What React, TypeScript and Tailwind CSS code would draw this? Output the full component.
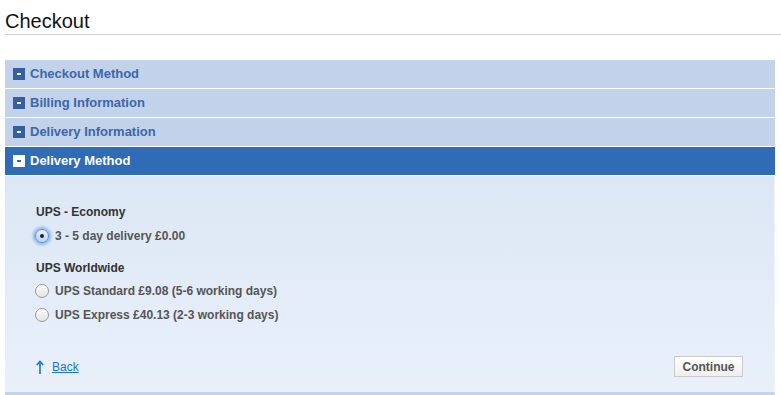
const STEPS = ["Checkout Method", "Billing Information", "Delivery Information"];

const OPTIONS_WORLDWIDE = [
  "UPS Standard £9.08 (5-6 working days)",
  "UPS Express £40.13 (2-3 working days)",
];

function MinusBox({ active }: { active?: boolean }) {
  return (
    <span
      className={
        "flex h-[12px] w-[12px] items-center justify-center " +
        (active ? "bg-white" : "bg-[#355f9f]")
      }
    >
      <span className={"h-[2px] w-[4px] " + (active ? "bg-[#2f6cb5]" : "bg-white")} />
    </span>
  );
}

function StepHeader({ label, active }: { label: string; active?: boolean }) {
  return (
    <div
      className={
        "flex h-[28px] items-center gap-[5px] pl-[8px] text-[13px] font-bold " +
        (active ? "bg-[#2f6cb5] text-white" : "bg-[#c1d2ea] text-[#3d67a8]")
      }
    >
      <MinusBox active={active} />
      <span>{label}</span>
    </div>
  );
}

function Radio({ checked, label }: { checked?: boolean; label: string }) {
  return (
    <label className="-ml-[1px] flex h-[18px] items-center gap-[6px] text-[12px] font-bold text-[#555]">
      {checked ? (
        <span className="flex h-[14px] w-[14px] items-center justify-center rounded-full border border-[#5a8fd6] bg-gradient-to-b from-[#eaf3fd] to-[#b9d3f2] shadow-[0_0_3px_2px_rgba(80,140,220,0.6)]">
          <span className="h-[4px] w-[4px] rounded-full bg-[#222]" />
        </span>
      ) : (
        <span className="h-[14px] w-[14px] rounded-full border border-[#9a9a9a] bg-gradient-to-b from-white to-[#e2e2e2]" />
      )}
      <span>{label}</span>
    </label>
  );
}

export default function App() {
  return (
    <div className="h-[395px] w-[781px] overflow-hidden bg-white font-['Liberation_Sans',Arial,sans-serif]">
      <div className="ml-[5px] border-b border-[#cfcfcf] pb-[1px] pt-[9px]">
        <h1 className="text-[20px] leading-[24px] text-[#111]">Checkout</h1>
      </div>

      <div className="ml-[5px] mt-[25px] flex w-[770px] flex-col gap-px">
        {STEPS.map((s) => (
          <StepHeader key={s} label={s} />
        ))}
        <StepHeader label="Delivery Method" active />

        <div className="h-[219px] border-b-[3px] border-r border-b-[#c3d3ea] border-r-[#eef3fb] bg-gradient-to-b from-[#dce7f5] to-[#e9f0fa] pl-[31px] pr-[31px] pt-[28px]">
          <p className="text-[12px] font-bold leading-[16px] text-[#333]">UPS - Economy</p>
          <div className="mt-[7px]">
            <Radio checked label="3 - 5 day delivery £0.00" />
          </div>

          <p className="mt-[15px] text-[12px] font-bold leading-[16px] text-[#333]">UPS Worldwide</p>
          <div className="mt-[6px] flex flex-col gap-[6px]">
            {OPTIONS_WORLDWIDE.map((o) => (
              <Radio key={o} label={o} />
            ))}
          </div>

          <div className="mt-[32px] flex items-center justify-between">
            <a href="#" className="flex items-center gap-[8px] text-[12px] text-[#1b75c9] underline">
              <svg width="8" height="14" viewBox="0 0 8 14" fill="none" stroke="#1b75c9" strokeWidth="1.6">
                <path d="M4 1.5V14" />
                <path d="M0.8 5L4 1.5L7.2 5" />
              </svg>
              Back
            </a>
            <button className="h-[21px] w-[69px] border border-[#c9c9c9] bg-gradient-to-b from-white to-[#eeeeee] text-[12px] font-bold text-[#555]">
              Continue
            </button>
          </div>
        </div>
      </div>
    </div>
  );
}
